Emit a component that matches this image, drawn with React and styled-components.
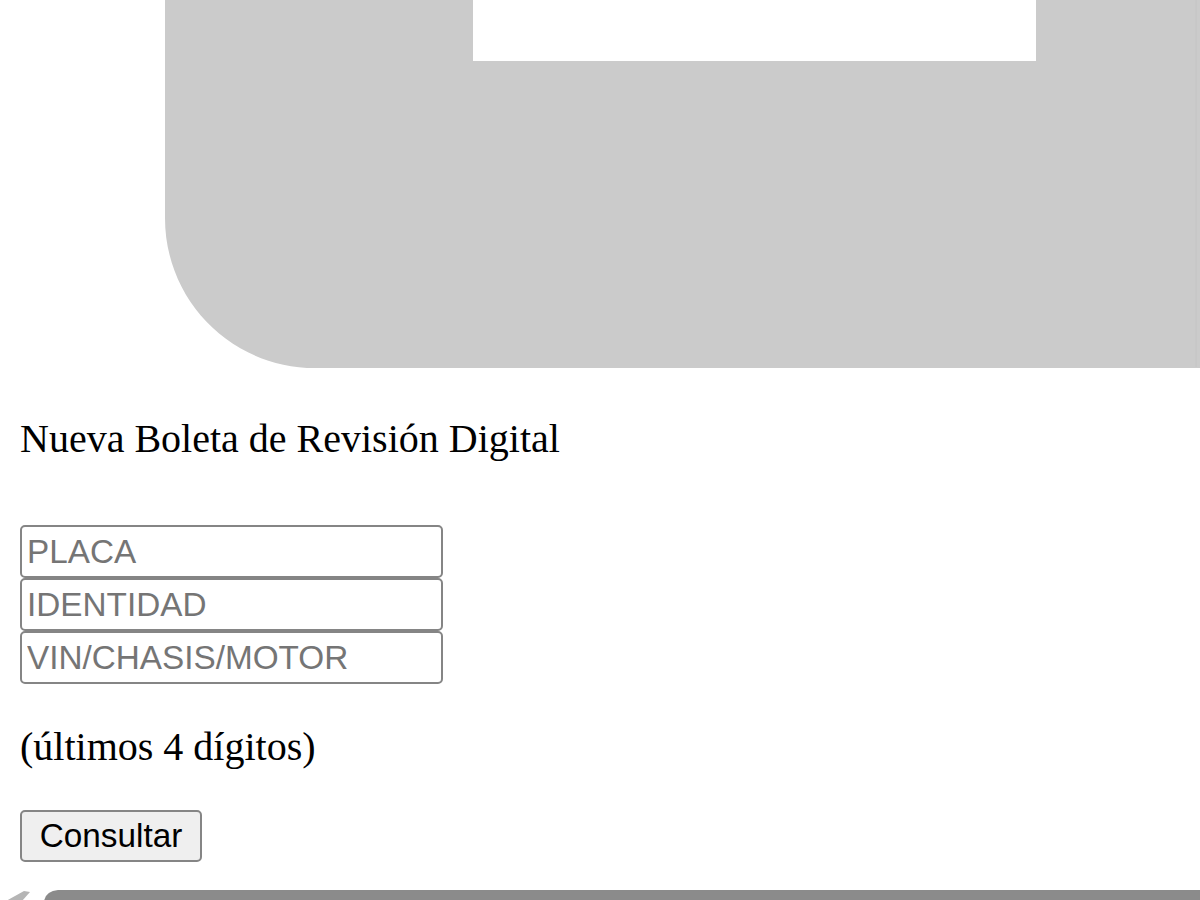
import styled, { createGlobalStyle } from "styled-components"

const GlobalStyle = createGlobalStyle`
    html, body {
        margin: 0;
        padding: 0;
        background: #fff;
    }
    body {
        font-family: "Liberation Serif", "Times New Roman", serif;
        font-size: 40px;
        color: #000;
        overflow: hidden;
    }
`

const Page = styled.main`
    width: 1200px;
    height: 900px;
    display: flex;
    flex-direction: column;
    overflow: hidden;
`

const Content = styled.div`
    padding: 0 20px;
`

const Banner = styled.div`
    display: flex;
    padding-left: 165px;

    svg {
        flex-shrink: 0;
        display: block;
    }
`

const Text = styled.p`
    margin: ${props => props.$top || 40}px 0 0;
    line-height: 46px;
`

const Form = styled.form`
    margin-top: ${props => props.$top}px;
    display: flex;
    flex-direction: column;
    align-items: flex-start;
`

const Field = styled.input`
    display: block;
    box-sizing: border-box;
    width: 423px;
    height: 53px;
    margin: 0;
    padding: 0 5px;
    border: 2px solid #858585;
    border-radius: 5px;
    font-family: "Liberation Sans", Arial, sans-serif;
    font-size: 33.3px;
    color: #000;
    background: #fff;
    outline: none;

    &::placeholder {
        color: #757575;
    }
`

const Button = styled.button`
    box-sizing: border-box;
    width: 182px;
    height: 52px;
    margin-top: 40px;
    padding: 0;
    border: 2px solid #858585;
    border-radius: 5px;
    background: #efefef;
    font-family: "Liberation Sans", Arial, sans-serif;
    font-size: 33.3px;
    color: #000;
`

const Footer = styled.div`
    margin-top: 27px;
    display: flex;

    svg {
        flex-shrink: 0;
        display: block;
    }
`

const Logo = () => (
    <svg width="1035" height="368" viewBox="0 0 1035 368">
        <path
            d="M0 0 H308 V61 H871 V0 H1035 V368 H150 C67 368 0 301 0 218 Z"
            fill="#cbcbcb"
        />
        <path d="M1031 0 V367" fill="none" stroke="#c4c4c4" strokeWidth="1" />
    </svg>
)

const Bottom = () => (
    <svg width="1200" height="12" viewBox="0 0 1200 12">
        <path d="M6 12 L24 2 L30 3 L22 12 Z" fill="#b5b5b5" />
        <path d="M44 12 Q46 2 58 1 H1200 V12 Z" fill="#8b8b8b" />
    </svg>
)

const App = () => {
  return (
    <Page>
        <GlobalStyle />
        <Banner>
            <Logo />
        </Banner>
        <Content>
            <Text $top={48}>Nueva Boleta de Revisión Digital</Text>
            <Form $top={63} onSubmit={e => e.preventDefault()}>
                <Field type="text" placeholder="PLACA" />
                <Field type="text" placeholder="IDENTIDAD" />
                <Field type="text" placeholder="VIN/CHASIS/MOTOR" />
            </Form>
            <Text>(últimos 4 dígitos)</Text>
            <Button type="button">Consultar</Button>
        </Content>
        <Footer>
            <Bottom />
        </Footer>
    </Page>
  )
}

export default App
